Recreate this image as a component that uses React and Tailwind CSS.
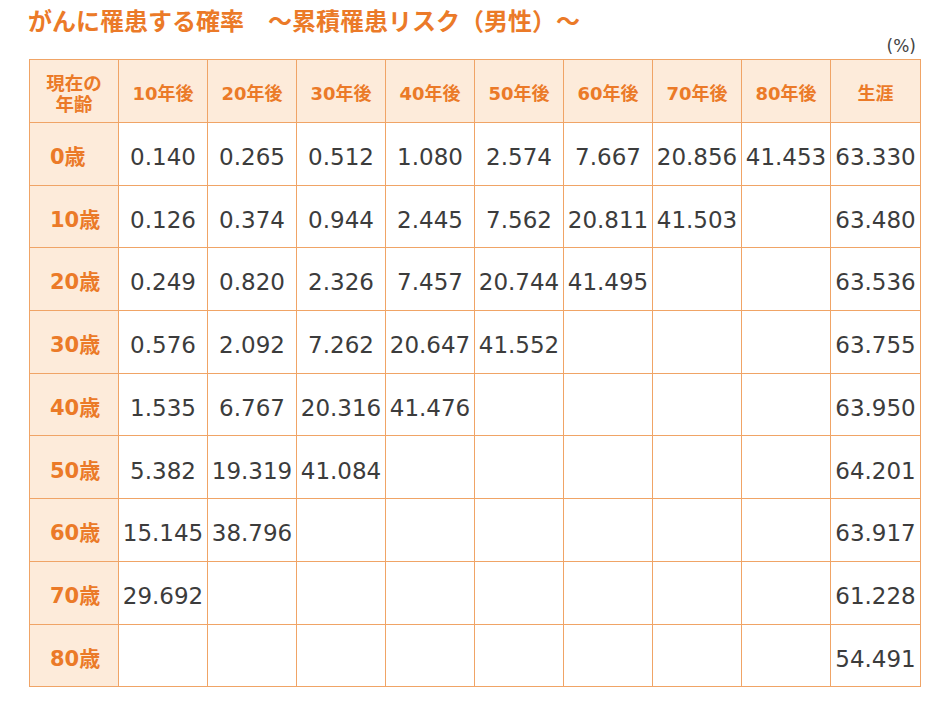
import React from "react";

const heads = ["10年後", "20年後", "30年後", "40年後", "50年後", "60年後", "70年後", "80年後", "生涯"];
const rows = [
  ["0歳", ["0.140", "0.265", "0.512", "1.080", "2.574", "7.667", "20.856", "41.453"], "63.330"],
  ["10歳", ["0.126", "0.374", "0.944", "2.445", "7.562", "20.811", "41.503"], "63.480"],
  ["20歳", ["0.249", "0.820", "2.326", "7.457", "20.744", "41.495"], "63.536"],
  ["30歳", ["0.576", "2.092", "7.262", "20.647", "41.552"], "63.755"],
  ["40歳", ["1.535", "6.767", "20.316", "41.476"], "63.950"],
  ["50歳", ["5.382", "19.319", "41.084"], "64.201"],
  ["60歳", ["15.145", "38.796"], "63.917"],
  ["70歳", ["29.692"], "61.228"],
  ["80歳", [], "54.491"],
];

const font = { fontFamily: '"DejaVu Sans", "Noto Sans CJK JP", sans-serif' };

export default function App() {
  return (
    <div className="w-[941px] h-[707px] bg-white relative" style={font}>
      <div className="pl-[28px] pt-[4px] h-[36px] text-[24px] font-bold text-[#eb7a28] leading-[32px] whitespace-nowrap" style={{ fontFamily: '"Noto Sans CJK JP", sans-serif' }}>
        がんに罹患する確率　～累積罹患リスク（男性）～
      </div>
      <div className="flex justify-end pr-[25px] h-[23px] text-[17px] leading-[20px] text-[#444]">(%)</div>
      <div className="pl-[29px]">
        <table className="border-collapse border border-[#f6c096] table-fixed w-[891px]">
          <colgroup>
            {Array.from({ length: 10 }).map((_, i) => (
              <col key={i} className={i === 9 ? "w-[90px]" : "w-[89px]"} />
            ))}
          </colgroup>
          <thead>
            <tr className="h-[63px] bg-[#fdebda]">
              <th className="border border-[#f0a466] text-[#eb7a28] font-bold text-[18.5px] leading-[21px] p-0 pt-[5px]">
                現在の<br />年齢
              </th>
              {heads.map((h) => (
                <th key={h} className="border border-[#f0a466] text-[#eb7a28] font-bold text-[18px] p-0 pt-[5px] whitespace-nowrap">
                  {h}
                </th>
              ))}
            </tr>
          </thead>
          <tbody>
            {rows.map(([label, vals, life]) => (
              <tr key={label} className="h-[62.7px]">
                <th className="border border-[#f0a466] bg-[#fdebda] text-[#eb7a28] font-bold text-[21px] text-left p-0 pl-[20px] pt-[8px] whitespace-nowrap">
                  {label}
                </th>
                {Array.from({ length: 8 }).map((_, i) => (
                  <td key={i} className="border border-[#f0a466] text-center text-[23px] text-[#3c3c3c] p-0 pt-[7px] whitespace-nowrap">
                    {vals[i] || ""}
                  </td>
                ))}
                <td className="border border-[#f0a466] text-center text-[23px] text-[#3c3c3c] p-0 pt-[7px] whitespace-nowrap">{life}</td>
              </tr>
            ))}
          </tbody>
        </table>
      </div>
    </div>
  );
}
